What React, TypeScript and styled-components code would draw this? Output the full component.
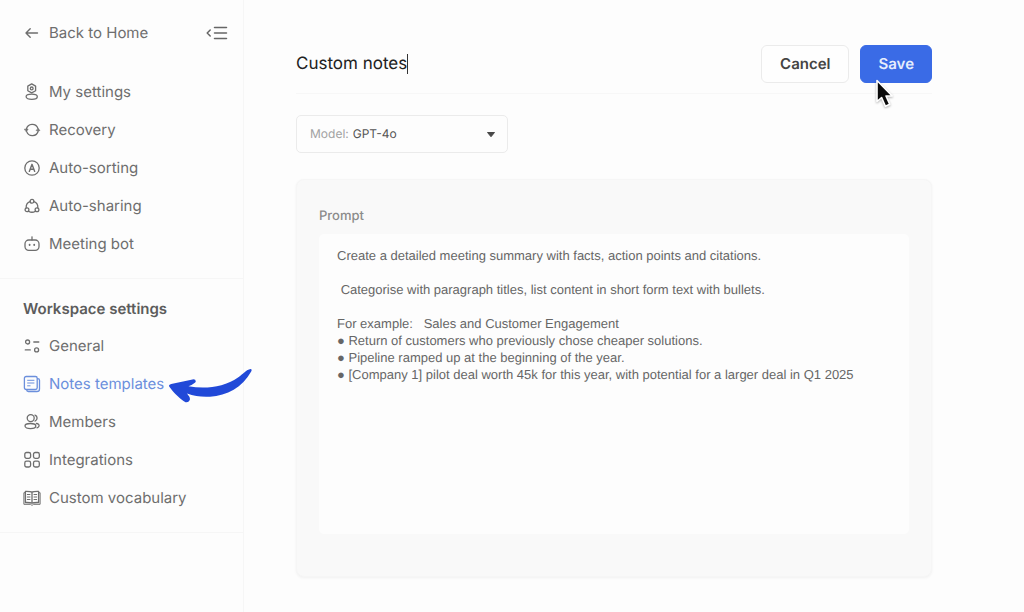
import React, { useState } from "react";
import styled, { createGlobalStyle } from "styled-components";

const GlobalStyle = createGlobalStyle`
  *, *::before, *::after { box-sizing: border-box; }
  body {
    margin: 0;
    background: #fdfdfd;
    color: #6a6a6a;
    font-family: Inter, "Liberation Sans", sans-serif;
    font-size: 15px;
    line-height: 20px;
    text-rendering: geometricPrecision;
  }
  button, input, select, textarea {
    font: inherit;
    text-rendering: inherit;
    color: inherit;
  }
`;

const Page = styled.div`
  display: flex;
  min-height: 100vh;
`;

const Sidebar = styled.aside`
  flex: 0 0 244px;
  border-right: 1px solid #f6f6f6;
`;

const SidebarTop = styled.div`
  display: flex;
  align-items: center;
  justify-content: space-between;
  padding: 14px 14px 9px 23px;
`;

const NavLink = styled.a<{ $active?: boolean }>`
  display: flex;
  align-items: center;
  gap: 8px;
  height: 38px;
  color: ${(p) => (p.$active ? "#6b8fdc" : "#6e6e6e")};
  text-decoration: none;
`;

const CollapseButton = styled.button`
  display: flex;
  padding: 0;
  border: 0;
  background: none;
  color: #666;
`;

const NavSection = styled.nav`
  padding: 12px 0 15px 23px;
  border-bottom: 1px solid #f6f6f6;
`;

const NavHeading = styled.h2`
  margin: 0;
  font-size: 15px;
  font-weight: 600;
  line-height: 36px;
  color: #5c5c5c;
`;

const NavList = styled.ul`
  margin: 0;
  padding: 0;
  list-style: none;
`;

const NavItem = styled.li`
  position: relative;
`;

const PointerArrow = styled.svg`
  position: absolute;
  top: 0;
  left: 142px;
  z-index: 1;
  pointer-events: none;
`;

const Main = styled.main`
  flex: 1;
  min-width: 0;
  padding: 45px 92px 34px 52px;
`;

const Header = styled.header`
  display: flex;
  align-items: center;
  justify-content: space-between;
  padding-bottom: 10px;
  border-bottom: 1px solid #f7f7f7;
`;

const TitleField = styled.div`
  display: flex;
  align-items: center;
`;

const TitleInput = styled.input`
  field-sizing: content;
  padding: 0;
  border: 0;
  outline: 0;
  background: none;
  font-size: 17px;
  line-height: 24px;
  color: #222;
  caret-color: transparent;
`;

const Caret = styled.span`
  width: 1px;
  height: 20px;
  background: #333;
`;

const Actions = styled.div`
  display: flex;
  gap: 11px;
`;

const Button = styled.button<{ $primary?: boolean }>`
  height: 38px;
  padding: 0 ${(p) => (p.$primary ? 17 : 18)}px;
  border: 1px solid ${(p) => (p.$primary ? "#3a6be6" : "#ebebeb")};
  border-radius: 6px;
  background: ${(p) => (p.$primary ? "#3a6be6" : "#fefefe")};
  color: ${(p) => (p.$primary ? "#e6edfc" : "#444")};
  font-weight: 600;
`;

const SaveSlot = styled.div`
  position: relative;
`;

const Cursor = styled.svg`
  position: absolute;
  top: 33px;
  left: 14px;
  pointer-events: none;
  filter: drop-shadow(0 1px 1px rgba(0, 0, 0, 0.3));
`;

const ModelField = styled.label`
  display: flex;
  align-items: center;
  gap: 4px;
  width: 212px;
  height: 38px;
  margin-top: 21px;
  padding: 0 11px 0 13px;
  border: 1px solid #ebebeb;
  border-radius: 5px;
  font-size: 12px;
  color: #a2a2a2;
`;

const ModelSelect = styled.select`
  flex: 1;
  min-width: 0;
  padding: 0;
  border: 0;
  outline: 0;
  appearance: none;
  background: none;
  color: #555;
`;

const PromptCard = styled.section`
  margin-top: 26px;
  padding: 26px 22px 42px;
  border: 1px solid #f6f6f6;
  border-radius: 8px;
  background: #f9f9f9;
  box-shadow: 0 1px 3px rgba(0, 0, 0, 0.05);
`;

const PromptLabel = styled.label`
  display: block;
  margin-bottom: 8px;
  font-size: 13px;
  font-weight: 500;
  color: #8b8b8b;
`;

const PromptText = styled.textarea`
  display: block;
  width: 100%;
  height: 300px;
  padding: 13px 18px;
  border: 0;
  border-radius: 5px;
  outline: 0;
  resize: none;
  background: #fdfdfd;
  font-family: "Liberation Sans", Arial, sans-serif;
  font-size: 13px;
  line-height: 17px;
  color: #666;
`;

const Icon = ({ children, width = 18 }: { children: React.ReactNode; width?: number }) => (
  <svg
    width={width}
    height="18"
    viewBox={`0 0 ${width} 18`}
    fill="none"
    stroke="currentColor"
    strokeWidth="1.3"
    strokeLinecap="round"
    strokeLinejoin="round"
    aria-hidden="true"
  >
    {children}
  </svg>
);

const icons = {
  back: (
    <Icon>
      <path d="M14.5 9H3.2M7.2 4.8 3 9l4.2 4.2" strokeWidth="1.4" />
    </Icon>
  ),
  user: (
    <Icon>
      <path d="M8.7.9 12.6 3.1v4.6L8.7 9.9 4.8 7.7V3.1Z" />
      <circle cx="8.7" cy="5.4" r="1.4" />
      <ellipse cx="8.7" cy="13.7" rx="5.6" ry="2.6" />
    </Icon>
  ),
  recovery: (
    <Icon>
      <path d="M3.4 8A6 6 0 0 1 14.9 7.4M15.2 10A6 6 0 0 1 3.7 10.6" />
      <path d="M1.7 8.2h3.4L3.4 10.4ZM13.5 9.6h3.4L15.2 7.6Z" fill="currentColor" strokeWidth=".7" />
    </Icon>
  ),
  sorting: (
    <Icon>
      <circle cx="9" cy="9" r="7.2" />
      <path d="M6.3 12.4 9 5.3l2.7 7.1M7.2 10.3h3.6" strokeWidth="1.4" />
    </Icon>
  ),
  sharing: (
    <Icon>
      <circle cx="9" cy="4.3" r="1.9" />
      <circle cx="4" cy="12.8" r="1.9" />
      <circle cx="14" cy="12.8" r="1.9" />
      <path d="M7.1 4.7A6 6 0 0 0 3.2 10.8M10.9 4.7a6 6 0 0 1 3.9 6.1M5.6 14.2a6.4 6.4 0 0 0 6.8 0" />
    </Icon>
  ),
  bot: (
    <Icon>
      <rect x="2" y="5" width="14" height="10.4" rx="3.8" />
      <path d="M9 5V1.8" />
      <path d="M6.6 9.6v.5M11.2 9.6v.5" strokeWidth="1.8" />
    </Icon>
  ),
  general: (
    <Icon>
      <circle cx="4.6" cy="5" r="2" />
      <circle cx="13.6" cy="12.9" r="2" />
      <path d="M10.8 5h5M2.3 12.9h5" />
    </Icon>
  ),
  notes: (
    <Icon>
      <rect x="1.4" y="1.5" width="12.8" height="13" rx="1.8" />
      <path d="M14.6 3.6c1.1 0 1.9.6 1.9 1.7v8.6c0 1.6-1 2.6-2.6 2.6H5.4c-1 0-1.7-.7-1.7-1.7" />
      <path d="M4.6 5.3h6.4M4.6 8h6.4M4.6 10.8h2.5" strokeWidth="1" />
    </Icon>
  ),
  members: (
    <Icon>
      <circle cx="7.7" cy="5.1" r="3.5" />
      <ellipse cx="7.4" cy="13.1" rx="5.4" ry="2.6" />
      <path d="M12 2.1a3.2 3.2 0 0 1 0 6M13.4 10.5c2 .2 3 1.3 2.6 2.6-.2.9-1 1.4-2 1.7" />
    </Icon>
  ),
  integrations: (
    <Icon>
      <rect x="1.8" y="1.5" width="5.8" height="5.8" rx="1.7" />
      <rect x="10.5" y="1.5" width="5.8" height="5.8" rx="1.7" />
      <rect x="1.8" y="10.2" width="5.8" height="5.8" rx="1.7" />
      <rect x="10.5" y="10.2" width="5.8" height="5.8" rx="1.7" />
    </Icon>
  ),
  vocabulary: (
    <Icon>
      <path d="M9 3.2C7.8 2.2 6 2.3 2.4 2.3v11.2c3.6 0 5.4-.1 6.6.7 1.2-.8 3-.7 6.6-.7V2.3C12 2.3 10.2 2.2 9 3.2ZM9 3.2v11" />
      <path d="M2.4 3.7H.9v11.6h6.3c.5 0 .7.8 1.8.8s1.3-.8 1.8-.8h6.3V3.7h-1.5" strokeWidth="1" />
      <path d="M4.3 5.5h2.7M4.3 8h2.7M4.3 10.5h2.7M11 5.5h2.7M11 8h2.7M11 10.5h2.7" strokeWidth="1" />
    </Icon>
  ),
};

type Entry = { label: string; icon: keyof typeof icons; active?: boolean };

const personal: Entry[] = [
  { label: "My settings", icon: "user" },
  { label: "Recovery", icon: "recovery" },
  { label: "Auto-sorting", icon: "sorting" },
  { label: "Auto-sharing", icon: "sharing" },
  { label: "Meeting bot", icon: "bot" },
];

const workspace: Entry[] = [
  { label: "General", icon: "general" },
  { label: "Notes templates", icon: "notes", active: true },
  { label: "Members", icon: "members" },
  { label: "Integrations", icon: "integrations" },
  { label: "Custom vocabulary", icon: "vocabulary" },
];

const Entries = ({ items }: { items: Entry[] }) => (
  <NavList>
    {items.map((item) => (
      <NavItem key={item.label}>
        <NavLink href="#" $active={item.active} aria-current={item.active ? "page" : undefined}>
          {icons[item.icon]}
          {item.label}
        </NavLink>
        {item.active && (
          <PointerArrow width="90" height="40" viewBox="0 0 90 40" aria-hidden="true">
            <path
              fill="#2149d8"
              d="M4.2 21.5Q3.4 19.8 6.2 19L27.5 14.4Q30.8 14 30.8 16.4 30.4 18.2 23.5 21.2C40 24.3 59 22.3 73 12.5 78 9 81.500 4.600 85.500 4Q87.400 4.200 86.200 6.600C77.500 22.500 62 30.800 45 31.700 36 32.200 29.500 31 22 28.500Q25 31.800 25 34.300 24 37.800 20.500 37.200C15.500 34 9 28.500 4.200 21.500Z"
            />
          </PointerArrow>
        )}
      </NavItem>
    ))}
  </NavList>
);

const initialPrompt = [
  "Create a detailed meeting summary with facts, action points and citations.",
  "",
  " Categorise with paragraph titles, list content in short form text with bullets.",
  "",
  "For example:   Sales and Customer Engagement",
  "● Return of customers who previously chose cheaper solutions.",
  "● Pipeline ramped up at the beginning of the year.",
  "● [Company 1] pilot deal worth 45k for this year, with potential for a larger deal in Q1 2025",
].join("\n");

export default function App() {
  const [title, setTitle] = useState("Custom notes");
  const [prompt, setPrompt] = useState(initialPrompt);

  return (
    <>
      <GlobalStyle />
      <Page>
        <Sidebar>
          <SidebarTop>
            <NavLink href="#">
              {icons.back}
              Back to Home
            </NavLink>
            <CollapseButton type="button" aria-label="Collapse sidebar">
              <Icon width={24}>
                <path d="M5.2 6 2.2 9l3 3M9.5 3.5h12M9.5 9h12M9.5 14.5h12" strokeWidth="1.5" />
              </Icon>
            </CollapseButton>
          </SidebarTop>
          <NavSection aria-label="Personal settings">
            <Entries items={personal} />
          </NavSection>
          <NavSection aria-label="Workspace settings">
            <NavHeading>Workspace settings</NavHeading>
            <Entries items={workspace} />
          </NavSection>
        </Sidebar>
        <Main>
          <Header>
            <TitleField>
              <TitleInput
                aria-label="Template name"
                value={title}
                onChange={(e) => setTitle(e.target.value)}
              />
              <Caret />
            </TitleField>
            <Actions>
              <Button type="button">Cancel</Button>
              <SaveSlot>
                <Button type="button" $primary>
                  Save
                </Button>
                <Cursor width="22" height="34" viewBox="0 0 22 34" aria-hidden="true">
                  <path
                    d="M3 2.5v21l4.600-4 3.800 8.700 4.400-1.900-3.800-8.300h6.200Z"
                    fill="#0b0b0b"
                    stroke="#fff"
                    strokeWidth="1.6"
                    strokeLinejoin="round"
                  />
                </Cursor>
              </SaveSlot>
            </Actions>
          </Header>
          <ModelField>
            Model:
            <ModelSelect defaultValue="GPT-4o">
              <option>GPT-4o</option>
            </ModelSelect>
            <svg width="10" height="8" viewBox="0 0 10 8" aria-hidden="true">
              <path
                d="M1.500 2.500h7L5 6.700Z"
                fill="#484848"
                stroke="#484848"
                strokeWidth="1"
                strokeLinejoin="round"
              />
            </svg>
          </ModelField>
          <PromptCard>
            <PromptLabel htmlFor="prompt">Prompt</PromptLabel>
            <PromptText
              id="prompt"
              spellCheck={false}
              value={prompt}
              onChange={(e) => setPrompt(e.target.value)}
            />
          </PromptCard>
        </Main>
      </Page>
    </>
  );
}
